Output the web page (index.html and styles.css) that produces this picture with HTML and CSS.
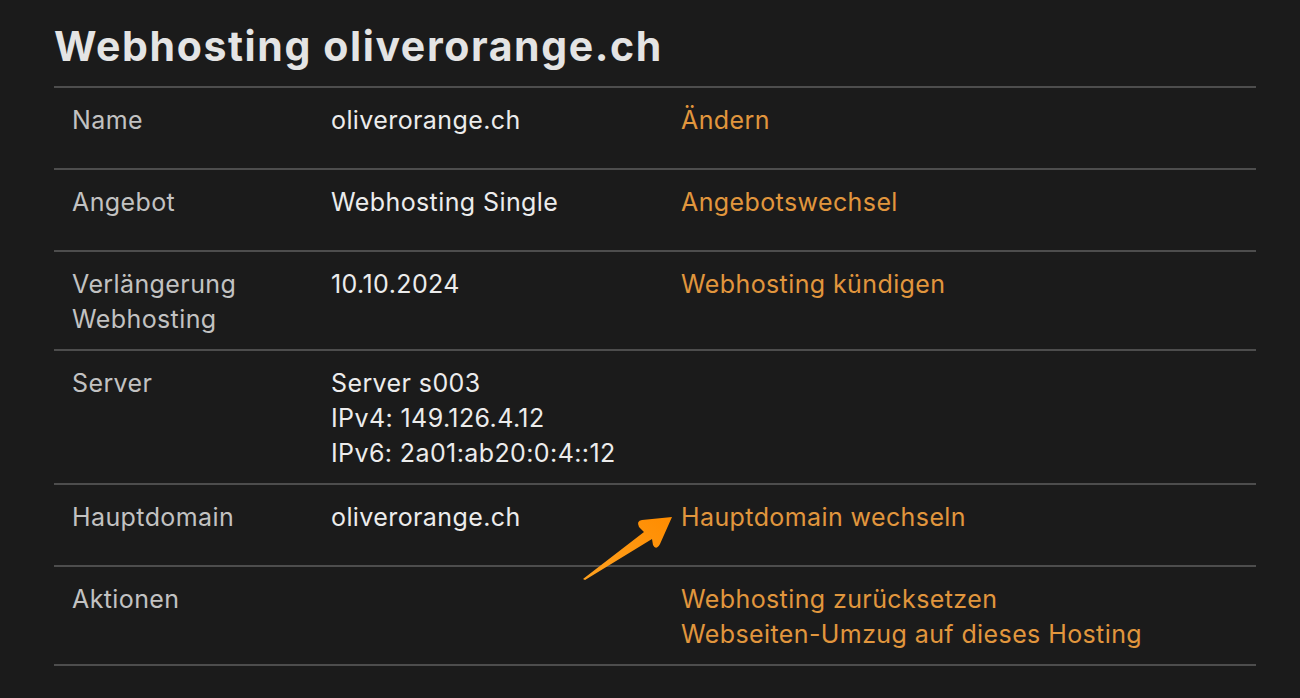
FILE: index.html
```html
<!DOCTYPE html>
<html lang="de">
<head>
<meta charset="utf-8">
<title>Webhosting oliverorange.ch</title>
<link rel="stylesheet" href="styles.css">
</head>
<body>
<main class="page">
  <h1 class="title">Webhosting oliverorange.ch</h1>
  <div class="table">
    <div class="row">
      <div class="label">Name</div>
      <div class="value">oliverorange.ch</div>
      <div class="actions"><a href="#">Ändern</a></div>
    </div>
    <div class="row">
      <div class="label">Angebot</div>
      <div class="value">Webhosting Single</div>
      <div class="actions"><a href="#">Angebotswechsel</a></div>
    </div>
    <div class="row">
      <div class="label">Verlängerung<br>Webhosting</div>
      <div class="value">10.10.2024</div>
      <div class="actions"><a href="#">Webhosting kündigen</a></div>
    </div>
    <div class="row">
      <div class="label">Server</div>
      <div class="value">Server s003<br>IPv4: 149.126.4.12<br>IPv6: 2a01:ab20:0:4::12</div>
      <div class="actions"></div>
    </div>
    <div class="row">
      <div class="label">Hauptdomain</div>
      <div class="value">oliverorange.ch</div>
      <div class="actions annotated">
        <svg class="arrow" width="105" height="82" viewBox="0 0 105 82">
          <defs>
            <linearGradient id="ag" x1="0" y1="1" x2="1" y2="0">
              <stop offset="0" stop-color="#ffa11f"/>
              <stop offset="1" stop-color="#ff8c00"/>
            </linearGradient>
          </defs>
          <path d="M8 74 L69 27 L64 22 Q61 16 67 15 L97 12 L85 39 Q81 46 78 40 L77 34 L10 75 Z" fill="url(#ag)"/>
        </svg>
        <a href="#">Hauptdomain wechseln</a>
      </div>
    </div>
    <div class="row">
      <div class="label">Aktionen</div>
      <div class="value"></div>
      <div class="actions"><a href="#">Webhosting zurücksetzen</a><br><a href="#">Webseiten-Umzug auf dieses Hosting</a></div>
    </div>
  </div>
</main>
</body>
</html>
```

FILE: styles.css
```css
html, body {
  margin: 0;
  padding: 0;
  background: #1b1b1b;
}
body {
  font-family: Inter, Lato, "DejaVu Sans", sans-serif;
  color: #e6e6e6;
}
.page {
  padding: 18px 44px 0 54px;
}
.title {
  margin: 0 0 12px 0;
  font-size: 41px;
  font-weight: 700;
  line-height: 56px;
  letter-spacing: 1.6px;
  color: #e4e4e4;
}
.table {
  border-bottom: 2px solid #4d4d4d;
}
.row {
  display: grid;
  grid-template-columns: 259px 350px 1fr;
  border-top: 2px solid #4d4d4d;
  min-height: 82px;
  box-sizing: border-box;
  padding: 15px 0 12px 18px;
  font-size: 25px;
  line-height: 35px;
  letter-spacing: 0.4px;
}
.label {
  color: #c2c2c2;
}
.value {
  color: #ececec;
}
.actions a {
  color: #e1963d;
  text-decoration: none;
}
.annotated {
  position: relative;
}
.arrow {
  position: absolute;
  left: -106px;
  top: 5px;
}
```
